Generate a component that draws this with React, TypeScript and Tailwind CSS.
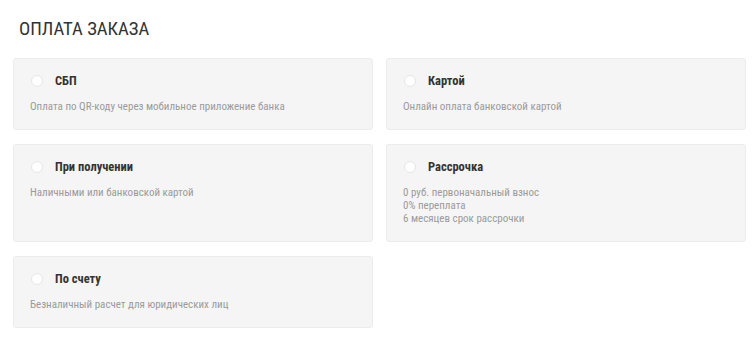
import React from "react";

type Option = { title: string; lines: string[] };

const options: Option[] = [
  { title: "СБП", lines: ["Оплата по QR-коду через мобильное приложение банка"] },
  { title: "Картой", lines: ["Онлайн оплата банковской картой"] },
  { title: "При получении", lines: ["Наличными или банковской картой"] },
  {
    title: "Рассрочка",
    lines: ["0 руб. первоначальный взнос", "0% переплата", "6 месяцев срок рассрочки"],
  },
  { title: "По счету", lines: ["Безналичный расчет для юридических лиц"] },
];

function PaymentCard({ option }: { option: Option }) {
  return (
    <label className="block rounded-[3px] border border-[#ececec] bg-[#f5f5f5] px-[16px] pt-[15px] pb-[16px] cursor-pointer">
      <div className="flex h-[14px] items-center">
        <span className="ml-px h-[12px] w-[12px] rounded-full border border-[#e6e6e6] bg-white" />
        <span className="ml-[12px] text-[12.5px] font-bold leading-[14px] text-[#333]">{option.title}</span>
      </div>
      <div className="mt-[12px] text-[11px] leading-[13px] text-[#9b9b9b]">
        {option.lines.map((line) => (
          <div key={line}>{line}</div>
        ))}
      </div>
    </label>
  );
}

export default function App() {
  return (
    <div
      className="h-[358px] w-[752px] bg-white"
      style={{ fontFamily: '"Roboto Condensed", "Liberation Sans Narrow", Roboto, sans-serif' }}
    >
      <h2 className="pl-[19px] pt-[18px] text-[18.7px] font-normal leading-[22px] text-[#333]">ОПЛАТА ЗАКАЗА</h2>
      <div className="mt-[18px] grid w-[746px] grid-cols-2 gap-x-[13px] gap-y-[14px] pl-[13px]">
        {options.map((o) => (
          <PaymentCard key={o.title} option={o} />
        ))}
      </div>
    </div>
  );
}
